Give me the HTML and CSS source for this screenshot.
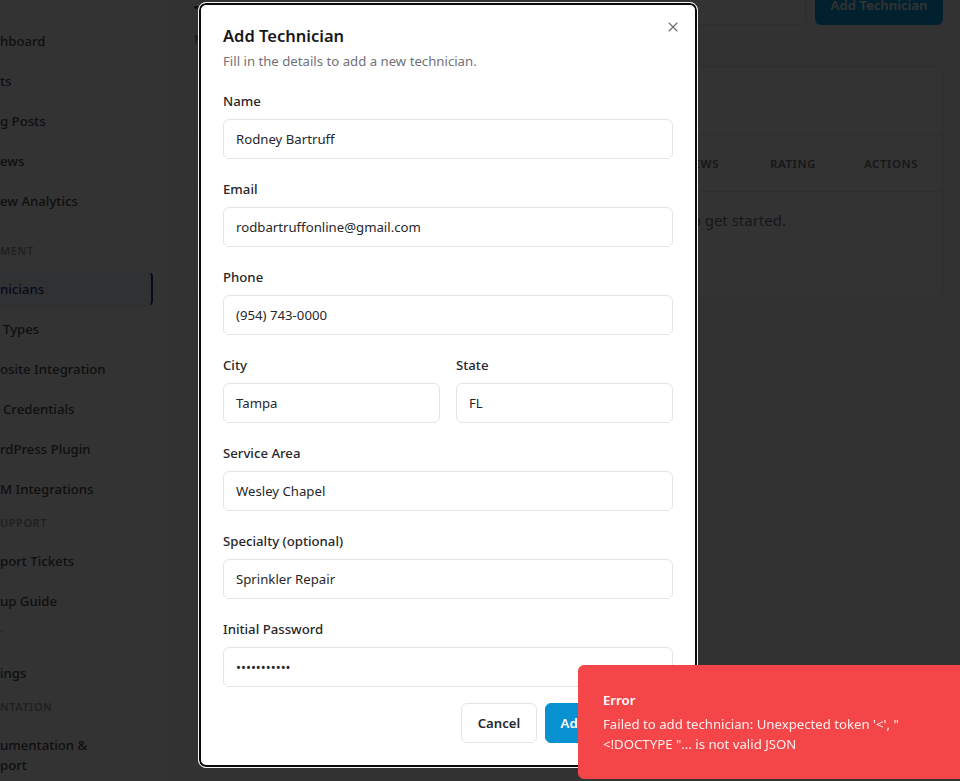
FILE: index.html
```html
<!DOCTYPE html>
<html lang="en">
<head>
<meta charset="utf-8">
<title>Technicians</title>
<link rel="stylesheet" href="styles.css">
</head>
<body>
<div class="app">
  <aside class="sidebar">
    <nav class="nav">
      <div class="nav-group">
        <a class="nav-item">hboard</a>
        <a class="nav-item">ts</a>
        <a class="nav-item">g Posts</a>
        <a class="nav-item">ews</a>
        <a class="nav-item">ew Analytics</a>
      </div>
      <div class="nav-heading nav-heading--first">MENT</div>
      <div class="nav-group">
        <a class="nav-item nav-item--active">nicians</a>
        <a class="nav-item nav-item--inset">Types</a>
        <a class="nav-item">osite Integration</a>
        <a class="nav-item nav-item--inset">Credentials</a>
        <a class="nav-item">rdPress Plugin</a>
        <a class="nav-item">M Integrations</a>
      </div>
      <div class="nav-heading">UPPORT</div>
      <div class="nav-group">
        <a class="nav-item">port Tickets</a>
        <a class="nav-item">up Guide</a>
      </div>
      <div class="nav-heading nav-heading--mark">.</div>
      <div class="nav-group">
        <a class="nav-item">ings</a>
      </div>
      <div class="nav-heading">NTATION</div>
      <div class="nav-group">
        <a class="nav-item nav-item--wrap">umentation &amp;<br>port</a>
      </div>
    </nav>
  </aside>
  <main class="main">
    <div class="topbar">
      <div class="page-heading">
        <h1 class="page-title">Technicians</h1>
        <p class="page-sub">Manage your field technicians</p>
      </div>
      <div class="topbar-actions">
        <div class="search"></div>
        <button class="btn-bg">Add Technician</button>
      </div>
    </div>
    <section class="card">
      <div class="card-head"></div>
      <div class="thead">
        <div class="th th--grow">NAME</div>
        <div class="th th--grow">EMAIL</div>
        <div class="th th--reviews">REVIEWS</div>
        <div class="th th--rating">RATING</div>
        <div class="th th--actions">ACTIONS</div>
      </div>
      <div class="empty">No technicians yet. Add your first technician to get started.</div>
    </section>
  </main>
</div>

<div class="overlay"></div>

<div class="modal" role="dialog">
  <button class="modal-close" aria-label="Close">
    <svg width="16" height="16" viewBox="0 0 24 24" fill="none" stroke="currentColor" stroke-width="1.6" stroke-linecap="round" stroke-linejoin="round"><path d="M18 6 6 18"/><path d="m6 6 12 12"/></svg>
  </button>
  <div class="modal-header">
    <h2 class="modal-title">Add Technician</h2>
    <p class="modal-desc">Fill in the details to add a new technician.</p>
  </div>
  <form class="form">
    <div class="field">
      <label class="label">Name</label>
      <input class="input" type="text" value="Rodney Bartruff">
    </div>
    <div class="field">
      <label class="label">Email</label>
      <input class="input" type="text" value="rodbartruffonline@gmail.com">
    </div>
    <div class="field">
      <label class="label">Phone</label>
      <input class="input" type="text" value="(954) 743-0000">
    </div>
    <div class="row">
      <div class="field">
        <label class="label">City</label>
        <input class="input" type="text" value="Tampa">
      </div>
      <div class="field">
        <label class="label">State</label>
        <input class="input" type="text" value="FL">
      </div>
    </div>
    <div class="field">
      <label class="label">Service Area</label>
      <input class="input" type="text" value="Wesley Chapel">
    </div>
    <div class="field">
      <label class="label">Specialty (optional)</label>
      <input class="input" type="text" value="Sprinkler Repair">
    </div>
    <div class="field">
      <label class="label">Initial Password</label>
      <input class="input" type="password" value="abcdefghijk">
    </div>
    <div class="modal-footer">
      <button type="button" class="btn btn-outline">Cancel</button>
      <button type="button" class="btn btn-primary">Add Technician</button>
    </div>
  </form>
</div>

<div class="toast" role="alert">
  <div class="toast-title">Error</div>
  <div class="toast-desc">Failed to add technician: Unexpected token '&lt;', "<br>&lt;!DOCTYPE "... is not valid JSON</div>
</div>
</body>
</html>
```

FILE: styles.css
```css
* { box-sizing: border-box; }

html, body {
  margin: 0;
  padding: 0;
  height: 100%;
}

body {
  font-family: "Noto Sans", "Open Sans", sans-serif;
  font-size: 13.2px;
  color: #18181b;
  background: #fafafa;
  overflow: hidden;
}

.app {
  display: flex;
  height: 781px;
}

/* Sidebar */
.sidebar {
  width: 170px;
  flex: none;
  background: #ffffff;
  border-right: 1px solid #e5e7eb;
  overflow: hidden;
}

.nav {
  display: flex;
  flex-direction: column;
  padding-top: 23px;
}

.nav-group {
  display: flex;
  flex-direction: column;
  gap: 4px;
}

.nav-item {
  display: block;
  width: 153px;
  height: 36px;
  line-height: 36px;
  font-size: 13.2px;
  font-weight: 500;
  color: #4b4b52;
  white-space: nowrap;
}

.nav-item--inset { padding-left: 3px; }

.nav-item--active {
  background: #eef2ff;
  color: #1e3a8a;
  border: 2px solid #1e3a8a;
  border-left: none;
  border-top-color: #eef2ff;
  border-bottom-color: #eef2ff;
  border-radius: 0 6px 6px 0;
  line-height: 32px;
}

.nav-item--wrap {
  height: auto;
  line-height: 20px;
  padding-top: 8px;
}

.nav-heading {
  font-size: 11px;
  font-weight: 600;
  letter-spacing: 0.05em;
  color: #a1a1aa;
  line-height: 16px;
  height: 16px;
  margin: 8px 0 12px;
  white-space: nowrap;
}

.nav-heading--first { margin-top: 24px; }
.nav-heading--mark { margin: 1px 0 19px; }

/* Main */
.main {
  flex: 1;
  padding: 0 17px 0 24px;
  margin-top: -15px;
  min-width: 0;
}

.topbar {
  display: flex;
  justify-content: space-between;
  align-items: flex-start;
  height: 40px;
  margin-bottom: 41px;
}

.page-heading {
  margin-top: 16px;
}

.page-title {
  margin: 0;
  font-size: 20px;
  font-weight: 700;
  line-height: 24px;
  color: #18181b;
}

.page-sub {
  margin: 4px 0 0;
  font-size: 13.2px;
  line-height: 20px;
  color: #71717a;
}

.topbar-actions {
  display: flex;
  gap: 9px;
}

.search {
  width: 260px;
  height: 40px;
  border: 1px solid #e4e4e7;
  border-radius: 6px;
  background: #fff;
}

.btn-bg {
  width: 128px;
  height: 40px;
  border: none;
  border-radius: 6px;
  background: #0ea5e9;
  color: #fff;
  font-family: inherit;
  font-size: 13.2px;
  font-weight: 600;
}

.card {
  background: #fff;
  border: 1px solid #e4e4e7;
  border-radius: 8px;
  height: 232px;
}

.card-head {
  height: 68px;
  border-bottom: 1px solid #e4e4e7;
}

.thead {
  display: flex;
  height: 57px;
  align-items: center;
  border-bottom: 1px solid #e4e4e7;
}

.th {
  font-size: 11.5px;
  font-weight: 600;
  letter-spacing: 0.05em;
  color: #71717a;
  padding-left: 24px;
}

.th--grow { flex: 1; }
.th--reviews { width: 104px; }
.th--rating { width: 94px; }
.th--actions { width: 102px; }

.empty {
  text-align: right;
  padding: 16px 156px 0 0;
  font-size: 15px;
  line-height: 24px;
  color: #71717a;
  white-space: nowrap;
}

/* Overlay */
.overlay {
  position: fixed;
  inset: 0;
  background: rgba(0, 0, 0, 0.8);
}

/* Modal */
.modal {
  position: fixed;
  left: 198px;
  top: 2px;
  width: 500px;
  background: #fff;
  border: 1px solid #f4f4f5;
  border-radius: 8px;
  box-shadow: inset 0 0 0 2px #0a0a0a;
  padding: 24px;
}

.modal-close {
  position: absolute;
  top: 16px;
  right: 16px;
  width: 16px;
  height: 16px;
  padding: 0;
  border: none;
  background: none;
  color: #52525b;
  opacity: 0.85;
  display: flex;
}

.modal-header {
  display: flex;
  flex-direction: column;
  gap: 6px;
}

.modal-title {
  margin: 0;
  font-size: 16.5px;
  font-weight: 600;
  line-height: 18px;
  color: #18181b;
}

.modal-desc {
  margin: 0;
  font-size: 13.2px;
  line-height: 20px;
  color: #71717a;
}

.form {
  margin-top: 20px;
  display: flex;
  flex-direction: column;
  gap: 20px;
}

.field {
  display: flex;
  flex-direction: column;
  gap: 8px;
  min-width: 0;
}

.row {
  display: grid;
  grid-template-columns: 1fr 1fr;
  gap: 16px;
}

.label {
  font-size: 13.2px;
  font-weight: 500;
  line-height: 20px;
  color: #27272a;
}

.input {
  height: 40px;
  width: 100%;
  border: 1px solid #e4e4e7;
  border-radius: 6px;
  padding: 0 12px;
  font-family: inherit;
  font-size: 13.2px;
  color: #27272a;
  background: #fff;
  outline: none;
}

.modal-footer {
  display: flex;
  justify-content: flex-end;
  gap: 8px;
  margin-top: -4px;
}

.btn {
  height: 40px;
  padding: 0 16px;
  border-radius: 6px;
  font-family: inherit;
  font-size: 13.2px;
  font-weight: 600;
}

.btn-outline {
  width: 76px;
  padding: 0;
  background: #fff;
  border: 1px solid #e4e4e7;
  color: #27272a;
}

.btn-primary {
  width: 128px;
  padding: 0;
  background: #0891d1;
  border: 1px solid #0891d1;
  color: #fff;
}

/* Toast */
.toast {
  position: fixed;
  left: 578px;
  top: 665px;
  width: 388px;
  background: #f44648;
  border: 1px solid #f44648;
  border-radius: 6px;
  padding: 24px 32px 24px 24px;
  color: #fff;
}

.toast-title {
  font-size: 13.2px;
  font-weight: 600;
  line-height: 20px;
}

.toast-desc {
  margin-top: 4px;
  font-size: 13.2px;
  line-height: 20px;
  opacity: 0.9;
  white-space: nowrap;
}
```
